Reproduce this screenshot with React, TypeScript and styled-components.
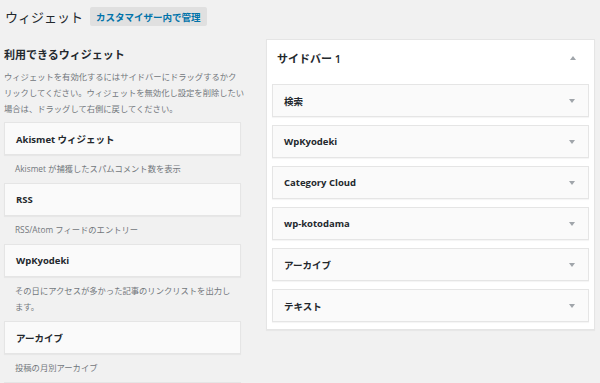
import React from "react";
import styled, { createGlobalStyle } from "styled-components";

const GlobalStyle = createGlobalStyle`
  html, body {
    margin: 0;
    padding: 0;
    background: #f1f1f1;
  }
  body {
    font-family: "Open Sans", "Noto Sans CJK JP", sans-serif;
    color: #23282d;
    overflow: hidden;
  }
`;

const Page = styled.div`
  width: 600px;
  height: 383px;
  padding: 0 4px;
  box-sizing: border-box;
  overflow: hidden;
`;

const Header = styled.div`
  display: flex;
  align-items: center;
  gap: 7px;
  height: 33px;
  padding-left: 1px;
`;

const Title = styled.h1`
  margin: 0;
  font-size: 13px;
  font-weight: 400;
  color: #23282d;
`;

const ActionButton = styled.span`
  display: inline-flex;
  align-items: center;
  height: 19px;
  padding: 0 6px;
  background: #e0e0e0;
  border-radius: 2px;
  color: #0073aa;
  font-size: 9.5px;
  font-weight: 700;
`;

const Columns = styled.div`
  display: grid;
  grid-template-columns: 237px 329px;
  column-gap: 25px;
  margin-top: 6px;
`;

const Available = styled.div`
  display: flex;
  flex-direction: column;
`;

const SectionHeading = styled.h2`
  margin: 8px 0 6px;
  font-size: 11px;
  font-weight: 700;
  line-height: 16px;
  color: #23282d;
`;

const Description = styled.p<{ $indent?: boolean }>`
  margin: 0;
  padding: ${(p) => (p.$indent ? "6px 0 6px 11px" : "0 0 5px")};
  font-size: 8.3px;
  line-height: 16px;
  color: #72777c;
  white-space: nowrap;
`;

const WidgetCard = styled.div`
  display: flex;
  align-items: center;
  justify-content: space-between;
  height: 33px;
  padding: 0 13px 0 11px;
  box-sizing: border-box;
  flex-shrink: 0;
  background: #fafafa;
  border: 1px solid #e5e5e5;
  box-shadow: 0 1px 1px rgba(0, 0, 0, 0.04);
  font-size: 9.5px;
  font-weight: 700;
  color: #23282d;
`;

const SidebarPanel = styled.div`
  background: #fff;
  border: 1px solid #e5e5e5;
  box-shadow: 0 1px 1px rgba(0, 0, 0, 0.04);
  padding: 0 5px 7px;
  box-sizing: border-box;
  display: flex;
  flex-direction: column;
  gap: 8px;
`;

const PanelHead = styled.div`
  display: flex;
  align-items: center;
  justify-content: space-between;
  height: 36px;
  padding: 0 13px 0 5px;
  font-size: 11px;
  font-weight: 600;
  color: #23282d;
`;

const Arrow = styled.span<{ $up?: boolean }>`
  width: 0;
  height: 0;
  border-left: 3.5px solid transparent;
  border-right: 3.5px solid transparent;
  ${(p) =>
    p.$up
      ? "border-bottom: 4px solid #a0a5aa;"
      : "border-top: 4px solid #a0a5aa;"}
`;

const widgets = [
  {
    name: "Akismet ウィジェット",
    desc: ["Akismet が捕獲したスパムコメント数を表示"],
  },
  { name: "RSS", desc: ["RSS/Atom フィードのエントリー"] },
  {
    name: "WpKyodeki",
    desc: ["その日にアクセスが多かった記事のリンクリストを出力し", "ます。"],
  },
  { name: "アーカイブ", desc: ["投稿の月別アーカイブ"] },
];

const sidebarItems = [
  "検索",
  "WpKyodeki",
  "Category Cloud",
  "wp-kotodama",
  "アーカイブ",
  "テキスト",
];

const App: React.FC = () => {
  return (
    <>
      <GlobalStyle />
      <Page>
        <Header>
          <Title>ウィジェット</Title>
          <ActionButton>カスタマイザー内で管理</ActionButton>
        </Header>
        <Columns>
          <Available>
            <SectionHeading>利用できるウィジェット</SectionHeading>
            <Description>
              ウィジェットを有効化するにはサイドバーにドラッグするかク
              <br />
              リックしてください。ウィジェットを無効化し設定を削除したい
              <br />
              場合は、ドラッグして右側に戻してください。
            </Description>
            {widgets.map((w) => (
              <React.Fragment key={w.name}>
                <WidgetCard>{w.name}</WidgetCard>
                <Description $indent>
                  {w.desc.map((line, i) => (
                    <React.Fragment key={i}>
                      {i > 0 && <br />}
                      {line}
                    </React.Fragment>
                  ))}
                </Description>
              </React.Fragment>
            ))}
            {/* next widget card, only its top edge is in view */}
            <WidgetCard />
          </Available>
          <div>
            <SidebarPanel>
              <PanelHead>
                <span>サイドバー 1</span>
                <Arrow $up />
              </PanelHead>
              {sidebarItems.map((item) => (
                <WidgetCard key={item}>
                  {item}
                  <Arrow />
                </WidgetCard>
              ))}
            </SidebarPanel>
          </div>
        </Columns>
      </Page>
    </>
  );
};

export default App;
